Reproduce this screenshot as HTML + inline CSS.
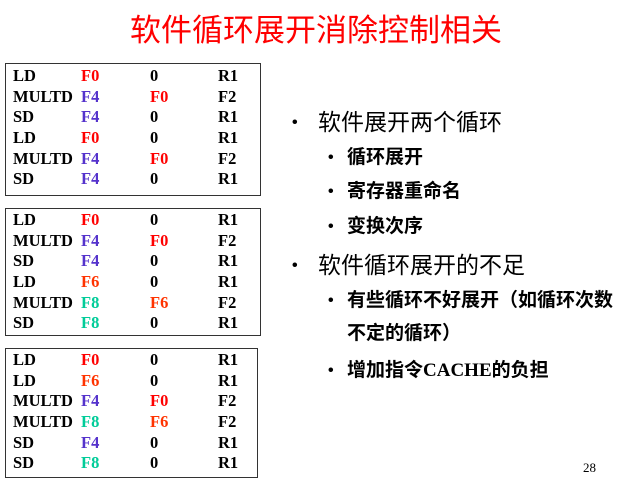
<!DOCTYPE html>
<html><head><meta charset="utf-8"><style>
body{margin:0;width:632px;height:484px;background:#fff;position:relative;overflow:hidden;font-family:"Liberation Serif","Noto Serif CJK SC",serif;}
.t{position:absolute;left:0;width:632px;top:11px;text-align:center;color:#ff0000;font-size:31px;font-family:"Liberation Sans","Noto Sans CJK SC",sans-serif;line-height:40px;}
.box{position:absolute;border:1.5px solid #333;box-sizing:border-box;}
.r{position:absolute;font-weight:bold;font-size:16.5px;line-height:20px;height:20px;}
.a{left:7px}.b{left:75px}.c{left:144px}.d{left:212px}
.F0{color:#ff0000}.F4{color:#5533cc}.F6{color:#ff3300}.F8{color:#00cc99}
.x{position:absolute;font-family:"Liberation Sans","Noto Sans CJK SC",sans-serif;white-space:nowrap;line-height:30px;}
.m{font-size:23px;left:318px}
.s{font-size:19px;font-weight:bold;left:347px}
.dot{position:absolute;font-size:16px;font-weight:bold;font-family:"Liberation Sans",sans-serif;line-height:30px}
.pg{position:absolute;left:583px;top:460px;font-size:13px;}
</style></head><body>
<div class="t">软件循环展开消除控制相关</div>

<div class="box" style="left:5px;top:63px;width:256px;height:133px">
<div class="r a" style="top:2px">LD</div><div class="r b F0" style="top:2px">F0</div><div class="r c" style="top:2px">0</div><div class="r d" style="top:2px">R1</div>
<div class="r a" style="top:23px">MULTD</div><div class="r b F4" style="top:23px">F4</div><div class="r c F0" style="top:23px">F0</div><div class="r d" style="top:23px">F2</div>
<div class="r a" style="top:43px">SD</div><div class="r b F4" style="top:43px">F4</div><div class="r c" style="top:43px">0</div><div class="r d" style="top:43px">R1</div>
<div class="r a" style="top:64px">LD</div><div class="r b F0" style="top:64px">F0</div><div class="r c" style="top:64px">0</div><div class="r d" style="top:64px">R1</div>
<div class="r a" style="top:85px">MULTD</div><div class="r b F4" style="top:85px">F4</div><div class="r c F0" style="top:85px">F0</div><div class="r d" style="top:85px">F2</div>
<div class="r a" style="top:105px">SD</div><div class="r b F4" style="top:105px">F4</div><div class="r c" style="top:105px">0</div><div class="r d" style="top:105px">R1</div>
</div>

<div class="box" style="left:5px;top:208px;width:256px;height:128px">
<div class="r a" style="top:1px">LD</div><div class="r b F0" style="top:1px">F0</div><div class="r c" style="top:1px">0</div><div class="r d" style="top:1px">R1</div>
<div class="r a" style="top:22px">MULTD</div><div class="r b F4" style="top:22px">F4</div><div class="r c F0" style="top:22px">F0</div><div class="r d" style="top:22px">F2</div>
<div class="r a" style="top:42px">SD</div><div class="r b F4" style="top:42px">F4</div><div class="r c" style="top:42px">0</div><div class="r d" style="top:42px">R1</div>
<div class="r a" style="top:63px">LD</div><div class="r b F6" style="top:63px">F6</div><div class="r c" style="top:63px">0</div><div class="r d" style="top:63px">R1</div>
<div class="r a" style="top:84px">MULTD</div><div class="r b F8" style="top:84px">F8</div><div class="r c F6" style="top:84px">F6</div><div class="r d" style="top:84px">F2</div>
<div class="r a" style="top:104px">SD</div><div class="r b F8" style="top:104px">F8</div><div class="r c" style="top:104px">0</div><div class="r d" style="top:104px">R1</div>
</div>

<div class="box" style="left:5px;top:348px;width:253px;height:130px">
<div class="r a" style="top:1px">LD</div><div class="r b F0" style="top:1px">F0</div><div class="r c" style="top:1px">0</div><div class="r d" style="top:1px">R1</div>
<div class="r a" style="top:22px">LD</div><div class="r b F6" style="top:22px">F6</div><div class="r c" style="top:22px">0</div><div class="r d" style="top:22px">R1</div>
<div class="r a" style="top:42px">MULTD</div><div class="r b F4" style="top:42px">F4</div><div class="r c F0" style="top:42px">F0</div><div class="r d" style="top:42px">F2</div>
<div class="r a" style="top:63px">MULTD</div><div class="r b F8" style="top:63px">F8</div><div class="r c F6" style="top:63px">F6</div><div class="r d" style="top:63px">F2</div>
<div class="r a" style="top:84px">SD</div><div class="r b F4" style="top:84px">F4</div><div class="r c" style="top:84px">0</div><div class="r d" style="top:84px">R1</div>
<div class="r a" style="top:104px">SD</div><div class="r b F8" style="top:104px">F8</div><div class="r c" style="top:104px">0</div><div class="r d" style="top:104px">R1</div>
</div>

<div class="dot" style="left:292px;top:108px">•</div><div class="x m" style="top:107px">软件展开两个循环</div>
<div class="dot" style="left:328px;top:143px">•</div><div class="x s" style="top:143px">循环展开</div>
<div class="dot" style="left:328px;top:177px">•</div><div class="x s" style="top:177px">寄存器重命名</div>
<div class="dot" style="left:328px;top:212px">•</div><div class="x s" style="top:212px">变换次序</div>
<div class="dot" style="left:292px;top:251px">•</div><div class="x m" style="top:250px">软件循环展开的不足</div>
<div class="dot" style="left:328px;top:286px">•</div><div class="x s" style="top:286px">有些循环不好展开（如循环次数</div>
<div class="x s" style="top:319px">不定的循环）</div>
<div class="dot" style="left:328px;top:356px">•</div><div class="x s" style="top:356px">增加指令<span style="font-family:'Liberation Serif',serif">CACHE</span>的负担</div>

<div class="pg">28</div>
</body></html>
